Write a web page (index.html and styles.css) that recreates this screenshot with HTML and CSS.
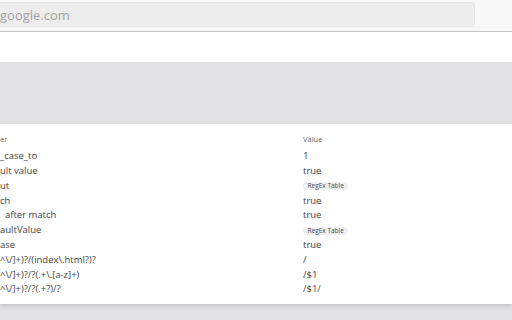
FILE: index.html
```html
<!DOCTYPE html>
<html>
<head>
<meta charset="utf-8">
<link rel="stylesheet" href="styles.css">
</head>
<body>
<div class="toolbar">
  <div class="url">google.com</div>
</div>
<div class="hero"></div>
<div class="content">
  <div class="card">
    <div class="grid">
      <div class="head">er</div>
      <div class="head">Value</div>

      <div class="cell">_case_to</div>
      <div class="cell">1</div>

      <div class="cell">ult value</div>
      <div class="cell">true</div>

      <div class="cell">ut</div>
      <div class="cell"><span class="badge">RegEx Table</span></div>

      <div class="cell">ch</div>
      <div class="cell">true</div>

      <div class="cell indent">after match</div>
      <div class="cell">true</div>

      <div class="cell">aultValue</div>
      <div class="cell"><span class="badge">RegEx Table</span></div>

      <div class="cell">ase</div>
      <div class="cell">true</div>

      <div class="cell">^\/]+)?/(index\.html?)?</div>
      <div class="cell">/</div>

      <div class="cell">^\/]+)?/?(.+\.[a-z]+)</div>
      <div class="cell">/$1</div>

      <div class="cell">^\/]+)?/?(.+?)/?</div>
      <div class="cell">/$1/</div>
    </div>
  </div>
</div>
</body>
</html>
```
FILE: styles.css
```css
html, body {
  margin: 0;
  padding: 0;
  background: #e3e3e6;
  height: 100%;
  overflow: hidden;
}

.toolbar {
  height: 32px;
  background: #f8f8f8;
  border-bottom: 1px solid #c6c6c6;
  display: flex;
  align-items: flex-start;
  padding-top: 2px;
  box-sizing: border-box;
}

.url {
  width: 475px;
  height: 25px;
  background: #ededed;
  border: 1px solid #e6e6e6;
  border-left: none;
  border-radius: 0 4px 4px 0;
  box-sizing: border-box;
  font-family: "Open Sans", "Noto Sans", sans-serif;
  font-size: 13px;
  line-height: 24px;
  color: #a2a2a2;
}

.hero {
  height: 30px;
  background: #ffffff;
}

.content {
  background: #e3e3e6;
  padding-top: 62px;
}

.card {
  background: #ffffff;
  box-shadow: 0 2px 5px rgba(0, 0, 0, 0.14);
  padding: 10px 0 7px 0;
  font-family: "Open Sans", "Noto Sans", sans-serif;
}

.grid {
  display: grid;
  grid-template-columns: 303px 1fr;
  grid-auto-rows: 14.8px;
  align-items: center;
}

.head {
  font-size: 7.5px;
  color: #6f6f6f;
  height: 10px;
  line-height: 10px;
  align-self: start;
}

.cell {
  font-size: 9.5px;
  color: #3f3f3f;
  white-space: nowrap;
  line-height: 12px;
}

.indent {
  padding-left: 5px;
}

.badge {
  display: inline-block;
  font-size: 6.5px;
  line-height: 8px;
  height: 8px;
  padding: 0 4.5px;
  border-radius: 4px;
  background: #eff0f3;
  color: #4a4a4a;
  vertical-align: middle;
}
```
